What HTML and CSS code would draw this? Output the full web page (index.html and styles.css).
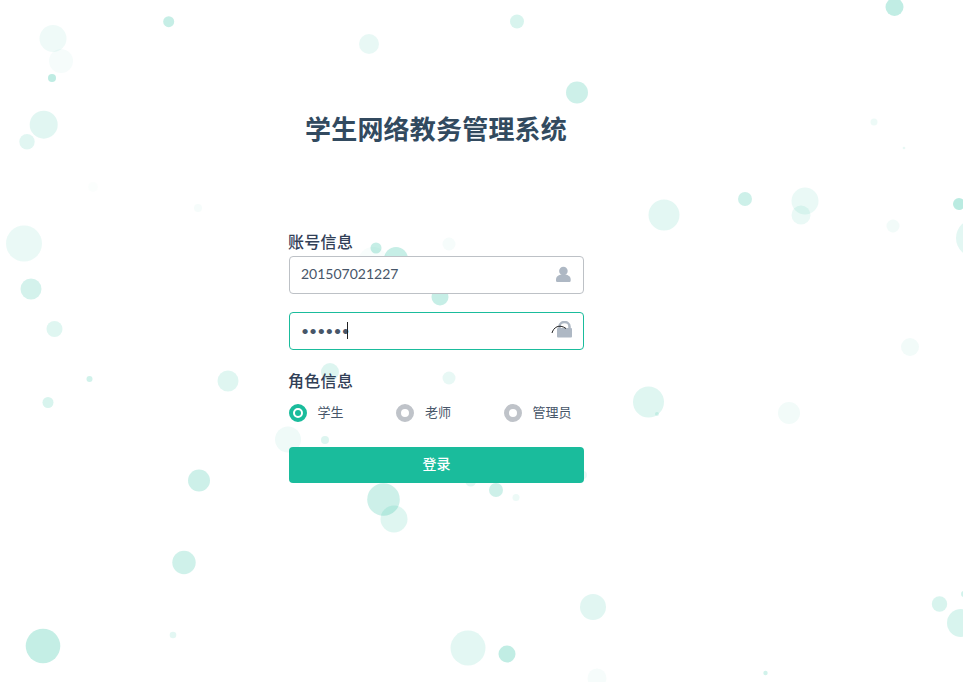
FILE: index.html
```html
<!DOCTYPE html>
<html lang="zh-CN">
<head>
<meta charset="utf-8">
<title>学生网络教务管理系统</title>
<link rel="stylesheet" href="styles.css">
</head>
<body>
<div class="page">
  <svg class="bubbles" width="963" height="682" viewBox="0 0 963 682" fill="#1abc9c" aria-hidden="true">
    <circle cx="53" cy="38.5" r="13.5" opacity=".07"/><circle cx="61" cy="61" r="12" opacity=".04"/><circle cx="52" cy="78" r="4" opacity=".28"/>
    <circle cx="168.7" cy="21.7" r="5.5" opacity=".25"/><circle cx="43.7" cy="124.7" r="14" opacity=".13"/><circle cx="27" cy="141.7" r="7.7" opacity=".13"/>
    <circle cx="93" cy="187" r="5" opacity=".015"/><circle cx="198" cy="208" r="4" opacity=".04"/><circle cx="24" cy="243.5" r="18" opacity=".09"/>
    <circle cx="31" cy="289" r="10.5" opacity=".19"/><circle cx="54.5" cy="329" r="8" opacity=".14"/><circle cx="89.5" cy="379" r="3" opacity=".2"/>
    <circle cx="228" cy="381" r="10.5" opacity=".14"/><circle cx="48" cy="402.5" r="5.5" opacity=".17"/><circle cx="288" cy="439.5" r="13" opacity=".07"/>
    <circle cx="199" cy="480.5" r="11" opacity=".22"/><circle cx="184" cy="562.5" r="11.7" opacity=".21"/><circle cx="173" cy="635" r="3.3" opacity=".12"/>
    <circle cx="43" cy="646" r="17.3" opacity=".26"/><circle cx="369" cy="44" r="10" opacity=".1"/><circle cx="517" cy="21.5" r="7" opacity=".17"/>
    <circle cx="577" cy="92.5" r="11" opacity=".22"/><circle cx="383.5" cy="499.5" r="16.3" opacity=".22"/><circle cx="394" cy="519" r="13.5" opacity=".14"/>
    <circle cx="470.7" cy="481" r="5.5" opacity=".12"/><circle cx="496" cy="490" r="7" opacity=".22"/><circle cx="516" cy="497.5" r="3.5" opacity=".08"/>
    <circle cx="593" cy="607" r="13" opacity=".13"/><circle cx="468" cy="648" r="17.5" opacity=".12"/><circle cx="507" cy="654" r="8.5" opacity=".27"/>
    <circle cx="597" cy="678" r="9.5" opacity=".04"/><circle cx="583" cy="475" r="4" opacity=".1"/><circle cx="894.5" cy="7" r="9" opacity=".27"/>
    <circle cx="874" cy="122" r="3.5" opacity=".08"/><circle cx="904" cy="148" r="1.3" opacity=".1"/><circle cx="664" cy="215" r="15.5" opacity=".12"/>
    <circle cx="745" cy="199" r="7" opacity=".22"/><circle cx="805" cy="201" r="13.5" opacity=".09"/><circle cx="801" cy="215" r="9.5" opacity=".09"/>
    <circle cx="893" cy="226" r="6.5" opacity=".06"/><circle cx="959" cy="204" r="6" opacity=".3"/><circle cx="975" cy="238" r="19" opacity=".12"/>
    <circle cx="910" cy="347" r="9" opacity=".06"/><circle cx="648.5" cy="402" r="15.5" opacity=".14"/><circle cx="657" cy="414" r="2" opacity=".15"/>
    <circle cx="789" cy="413" r="11" opacity=".06"/><circle cx="939.5" cy="604" r="7.7" opacity=".17"/><circle cx="961" cy="623" r="14" opacity=".17"/>
    <circle cx="765.5" cy="673" r="2.2" opacity=".2"/><circle cx="964" cy="594" r="3" opacity=".2"/><circle cx="376" cy="248" r="5.5" opacity=".25"/>
    <circle cx="396" cy="259" r="12" opacity=".25"/><circle cx="373" cy="262" r="15" opacity=".03"/><circle cx="440" cy="297" r="8.5" opacity=".25"/>
    <circle cx="449" cy="244" r="6.5" opacity=".04"/><circle cx="330" cy="372" r="9" opacity=".15"/><circle cx="449" cy="378" r="6.5" opacity=".1"/>
    <circle cx="325" cy="440" r="4" opacity=".15"/>
  </svg>
  <main class="login">
    <h1 class="title">学生网络教务管理系统</h1>
    <form class="form">
      <div class="label">账号信息</div>
      <div class="field">
        <input class="input" type="text" value="201507021227">
        <svg class="icon" width="16" height="18" viewBox="0 0 16 18" fill="#aeb8c4"><circle cx="8.400" cy="6" r="4.300"/><path d="M1 14.500C1 11.500 3.500 9.500 8.400 9.500S15.700 11.500 15.700 14.500V15.500C15.700 16.500 15 17 14 17H2.700C1.700 17 1 16.500 1 15.500Z"/></svg>
      </div>
      <div class="field field-active">
        <input class="input" type="password" value="123456">
        <span class="caret"></span>
        <svg class="icon icon-lock" width="21" height="17" viewBox="0 0 21 17"><path d="M8.500 8V5.500a5 4.500 0 0 1 10 0V8" fill="none" stroke="#aeb8c4" stroke-width="2.500"/><rect x="6" y="7" width="15" height="9.500" rx="1" fill="#aeb8c4"/><path d="M1 12C2.500 6.500 8 2.500 15 7.500" fill="none" stroke="#222" stroke-width="1"/></svg>
      </div>
      <div class="label label-role">角色信息</div>
      <div class="radios">
        <label class="radio"><span class="dot dot-on"></span>学生</label>
        <label class="radio"><span class="dot"></span>老师</label>
        <label class="radio"><span class="dot"></span>管理员</label>
      </div>
      <button class="submit" type="button">登录</button>
    </form>
  </main>
</div>
</body>
</html>
```
FILE: styles.css
```css
html, body { margin: 0; padding: 0; background: #fff; }
body { font-family: Lato, "Noto Sans CJK SC", sans-serif; color: #324057; }
.page { position: relative; width: 963px; height: 682px; overflow: hidden; }
.bubbles { position: absolute; left: 0; top: 0; }
.login { position: relative; width: 295px; margin-left: 289px; padding-top: 111px; }
.title { margin: 0 0 84px; padding-right: 1px; font-size: 26px; line-height: 36px; font-weight: 700; letter-spacing: .2px; text-align: center; color: #324a5f; white-space: nowrap; }
.form { display: flex; flex-direction: column; }
.label { margin: 0 0 3px -1px; font-size: 16px; line-height: 22px; font-weight: 500; letter-spacing: .3px; color: #324057; }
.label-role { margin: 2px 0 12px -1px; }
.field { position: relative; display: flex; align-items: center; margin-bottom: 18px; }
.input { box-sizing: border-box; width: 100%; height: 38px; padding: 0 40px 3px 11px; font: 14px Lato, "Noto Sans CJK SC", sans-serif; color: #475669; background: #fff; border: 1px solid #bdc1c6; border-radius: 4px; outline: none; }
.field-active .input { padding-bottom: 1px; border-color: #1abc9c; }
.icon { position: absolute; right: 13px; top: 9px; }
.icon-lock { right: 12px; top: 9px; }
.caret { position: absolute; left: 58px; top: 10px; width: 1px; height: 17px; background: #222; }
.radios { display: grid; grid-template-columns: repeat(3, 107.500px); height: 18px; margin-bottom: 25px; }
.radio { display: flex; align-items: flex-start; font-size: 13px; line-height: 16px; color: #475669; }
.dot { box-sizing: border-box; display: flex; align-items: center; justify-content: center; flex: none; width: 18px; height: 18px; margin-right: 11px; margin-left: -.5px; border: 5px solid #bfc3c9; border-radius: 50%; background: #fff; }
.dot-on { border-width: 4px; border-color: #1abc9c; }
.dot-on::after { content: ""; width: 6px; height: 6px; border-radius: 50%; background: #1abc9c; }
.submit { height: 36px; padding: 0 0 4px; font: 500 14px Lato, "Noto Sans CJK SC", sans-serif; color: #fff; background: #1abc9c; border: 0; border-radius: 4px; }
```
